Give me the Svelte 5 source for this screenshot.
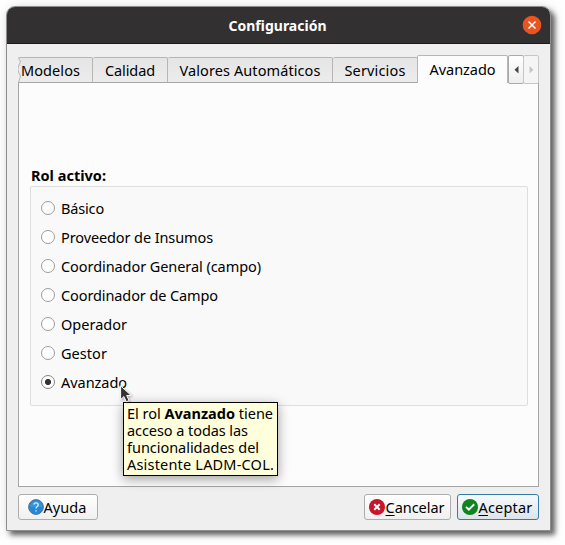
<script>
  const tabs = [
    { label: 'Modelos', box: 75, text: 59 },
    { label: 'Calidad', box: 75, text: 50 },
    { label: 'Valores Automáticos', box: 165, text: 141 },
    { label: 'Servicios', box: 85, text: 61 },
    { label: 'Avanzado', box: 91, text: 66 }
  ];
  const roles = [
    { label: 'Básico', text: 43 },
    { label: 'Proveedor de Insumos', text: 152 },
    { label: 'Coordinador General (campo)', text: 200 },
    { label: 'Coordinador de Campo', text: 157 },
    { label: 'Operador', text: 66 },
    { label: 'Gestor', text: 46 },
    { label: 'Avanzado', text: 66 }
  ];
  let selected = $state(6);

  // Spreads the letters so that the text takes the given width.
  function fit(node, width) {
    const natural = node.getBoundingClientRect().width;
    const gaps = node.textContent.length;
    node.style.letterSpacing = `${(width - natural) / gaps}px`;
  }
</script>

<main>
  <section class="window">
    <header>
      <h1><span class="t" use:fit={98}>Configuración</span></h1>
      <button class="close" aria-label="Cerrar">
        <svg width="20" height="20" viewBox="0 0 20 20"><circle cx="10" cy="10" r="9.3" fill="#e95420" /><path d="M6.5 6.5l7 7M13.5 6.5l-7 7" stroke="#fff" stroke-width="1.5" /></svg>
      </button>
    </header>
    <div class="body">
      <nav>
        {#each tabs as tab, i}
          <div class="tab" class:first={i === 0} class:active={i === 4} style="width:{tab.box}px">
            {#if i === 0}
              <svg class="tear" width="5" height="26" viewBox="0 0 5 26"><path d="M0 0L2.5 4L.5 8L2.5 12.5L.5 17L2.5 21.500L0 26Z" fill="#efefef" /><path d="M.3 0.5L2.5 5L.5 9Q-.5 12.500 .5 15L2.500 19L.5 25.500" fill="none" stroke="#b6b6b6" /></svg>
            {/if}
            <span class="t" use:fit={tab.text}>{tab.label}</span>
          </div>
        {/each}
        <div class="scroll"><svg width="5" height="8"><path d="M4.500 0V7.500L.5 3.750Z" fill="#454545" /></svg></div>
        <div class="scroll right"><svg width="5" height="8"><path d="M.5 0V7.500L4.500 3.750Z" fill="#c6c6c6" /></svg></div>
      </nav>
      <div class="pane">
        <h2><span class="t" use:fit={75}>Rol activo:</span></h2>
        <div class="group">
          {#each roles as role, i}
            <label>
              <input type="radio" name="rol" value={i} bind:group={selected} />
              <span class="t" use:fit={role.text}>{role.label}</span>
            </label>
          {/each}
        </div>
      </div>
      <footer>
        <button class="btn help">
          <svg width="16" height="16" viewBox="0 0 16 16"><circle cx="8" cy="8" r="7.400" fill="#2688d2" stroke="#49779b" /><path d="M2 8a6 6 0 0 1 12 0Z" fill="#4ba2df" opacity=".5" /><path d="M5.800 5.500Q6.200 3.900 8 3.900Q10.200 3.900 10.200 5.800Q10.200 6.900 9 7.800Q8 8.500 8 9.600M8 11.200V12.500" fill="none" stroke="#d8efff" stroke-width="1.300" /></svg>
          <span class="t" use:fit={43}>Ayuda</span>
        </button>
        <button class="btn cancel">
          <svg width="16" height="16" viewBox="0 0 16 16"><circle cx="8" cy="8" r="8" fill="#c7162b" /><path d="M5.300 5.300l5.400 5.400M10.700 5.300l-5.400 5.400" stroke="#fff" stroke-width="2" /></svg>
          <span class="t" use:fit={59}><u>C</u>ancelar</span>
        </button>
        <button class="btn accept">
          <svg width="16" height="16" viewBox="0 0 16 16"><circle cx="8" cy="8" r="8" fill="#0e8420" /><path d="M4 7.800l2.800 2.800L12.200 5.300" fill="none" stroke="#fff" stroke-width="1.900" /></svg>
          <span class="t" use:fit={54}><u>A</u>ceptar</span>
        </button>
      </footer>
    </div>
  </section>
  <aside>
    <div><span class="t" use:fit={146}>El rol <b>Avanzado</b> tiene</span></div>
    <div><span class="t" use:fit={121}>acceso a todas las</span></div>
    <div><span class="t" use:fit={132}>funcionalidades del</span></div>
    <div><span class="t" use:fit={147}>Asistente LADM-COL.</span></div>
  </aside>
  <svg class="cursor" width="12" height="18" viewBox="0 0 12 18"><path d="M.6 .8V14.600L3.900 11.600L6.300 16.800L9.100 15.500L6.700 10.500H11.200Z" fill="#333" stroke="#fff" /></svg>
</main>

<style>
  :global(body) { margin: 0; background: #fff; }
  * { box-sizing: border-box; }
  main {
    position: relative; width: 565px; height: 545px; overflow: hidden; background: #fefefe;
    font: 14.500px/20px "Noto Sans", sans-serif; color: #000; padding: 6px 0 0 6px;
  }
  .t { white-space: pre; display: inline-block; flex: none; }
  .window {
    width: 545px; height: 525px; background: #efefef; border: 1px solid #8e8e8e;
    border-radius: 9px 9px 0 0; box-shadow: 4px 4px 5px rgba(0,0,0,.55), 2px 2px 11px rgba(0,0,0,.18);
  }
  header {
    height: 37px; background: #333031; border-bottom: 1px solid #1c1a1b; border-radius: 8px 8px 0 0;
    display: flex; align-items: center; justify-content: center; position: relative; color: #fff;
  }
  h1 { margin: 2px 2px 0 0; font-size: 14px; line-height: 20px; font-weight: 700; }
  .close { position: absolute; right: 8px; top: 8px; width: 20px; height: 20px; padding: 0; border: 0; background: none; }
  svg { display: block; flex: none; }
  .body { padding: 11px 11px 0; }
  nav { display: flex; height: 28px; align-items: flex-end; position: relative; z-index: 1; }
  .tab {
    height: 26px; flex: none; display: flex; justify-content: center; align-items: center;
    background: linear-gradient(#e5e5e5, #ececec); border: 1px solid #b6b6b6; border-left: 0;
    border-bottom-color: #a5a5a5; border-radius: 2px 2px 0 0; position: relative;
  }
  .first { justify-content: flex-start; padding-left: 3px; }
  .tear { position: absolute; left: 0; top: -1px; }
  .active { height: 28px; background: #fcfcfc; border-left: 1px solid #b6b6b6; border-bottom: 0; padding-bottom: 1px; margin-left: -1px; }
  .scroll {
    width: 16px; height: 29px; margin-bottom: -1px; flex: none; border: 1px solid #aaa; border-radius: 2px;
    display: flex; align-items: center; justify-content: center; background: linear-gradient(#fff, #eee);
  }
  .scroll.right { margin-left: -1px; border-color: #c6c6c6; background: #f5f5f5; }
  .pane { margin-top: -1px; height: 405px; border: 1px solid #a5a5a5; background: #fcfcfc; padding: 82px 10px 0 11px; }
  h2 { margin: 0 0 1px 1px; font-size: 14.500px; line-height: 20px; font-weight: 700; }
  .group {
    height: 220px; border: 1px solid #dedede; border-radius: 2px; background: #f9f9f9;
    padding: 6px 0 0 10px;
  }
  label { display: flex; align-items: center; height: 29px; gap: 6px; }
  input {
    appearance: none; width: 14px; height: 14px; margin: 0; flex: none; border: 1px solid #9c9c9c;
    border-radius: 50%; background: #fff;
  }
  input:checked { background: radial-gradient(circle, #323232 0 2.700px, #fff 3.400px); border-color: #858585; }
  footer { display: flex; margin-top: 7px; }
  .btn {
    height: 26px; flex: none; padding: 0 2px 1px 0; border: 1px solid #adadad; border-radius: 3px;
    background: linear-gradient(#fff, #f0f0f0); font: inherit; color: #000;
    display: flex; align-items: center; justify-content: center;
  }
  .help { width: 80px; }
  .cancel { width: 87px; margin-left: 266px; gap: 1px; }
  .accept { width: 82px; margin-left: 6px; gap: 1px; border-color: #357ba8; background: linear-gradient(#f7fafc, #dce4eb); }
  u { text-underline-offset: 2px; text-decoration-thickness: 1px; }
  aside {
    position: absolute; left: 123px; top: 402px; width: 155px; height: 74px; border: 1px solid #000;
    background: #ffffdc; padding: 2px 0 0 3px; line-height: 17px; font-size: 14.500px;
    box-shadow: 0 3px 11px rgba(0,0,0,.38);
  }
  aside div { height: 17px; }
  .cursor { position: absolute; left: 120px; top: 385px; filter: drop-shadow(1px 1px 1px rgba(0,0,0,.3)); }
</style>
